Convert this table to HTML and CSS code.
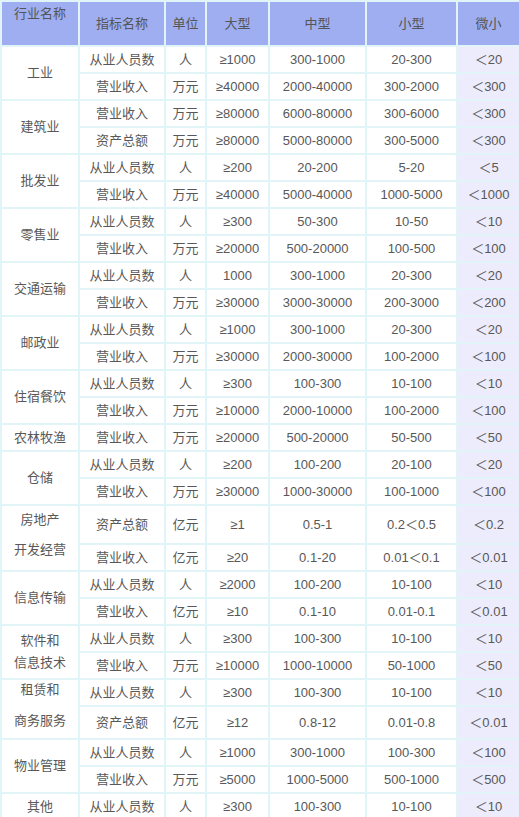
FILE: index.html
```html
<!DOCTYPE html>
<html lang="zh-CN">
<head>
<meta charset="utf-8">
<title>统计上大中小微型企业划分标准</title>
<link rel="stylesheet" href="styles.css">
</head>
<body>
<table class="std">
  <colgroup>
    <col class="c-ind"><col class="c-idx"><col class="c-unit"><col class="c-l"><col class="c-m"><col class="c-s"><col class="c-xs">
  </colgroup>
  <thead>
    <tr class="head">
      <th class="top">行业名称</th><th>指标名称</th><th>单位</th><th>大型</th><th>中型</th><th>小型</th><th class="xs">微小</th>
    </tr>
  </thead>
  <tbody>
    <tr class="r"><td rowspan="2">工业</td><td>从业人员数</td><td>人</td><td>≥1000</td><td>300-1000</td><td>20-300</td><td class="xs">＜20</td></tr>
    <tr class="r"><td>营业收入</td><td>万元</td><td>≥40000</td><td>2000-40000</td><td>300-2000</td><td class="xs">＜300</td></tr>

    <tr class="r"><td rowspan="2">建筑业</td><td>营业收入</td><td>万元</td><td>≥80000</td><td>6000-80000</td><td>300-6000</td><td class="xs">＜300</td></tr>
    <tr class="r"><td>资产总额</td><td>万元</td><td>≥80000</td><td>5000-80000</td><td>300-5000</td><td class="xs">＜300</td></tr>

    <tr class="r"><td rowspan="2">批发业</td><td>从业人员数</td><td>人</td><td>≥200</td><td>20-200</td><td>5-20</td><td class="xs">＜5</td></tr>
    <tr class="r"><td>营业收入</td><td>万元</td><td>≥40000</td><td>5000-40000</td><td>1000-5000</td><td class="xs">＜1000</td></tr>

    <tr class="r"><td rowspan="2">零售业</td><td>从业人员数</td><td>人</td><td>≥300</td><td>50-300</td><td>10-50</td><td class="xs">＜10</td></tr>
    <tr class="r"><td>营业收入</td><td>万元</td><td>≥20000</td><td>500-20000</td><td>100-500</td><td class="xs">＜100</td></tr>

    <tr class="r"><td rowspan="2">交通运输</td><td>从业人员数</td><td>人</td><td>1000</td><td>300-1000</td><td>20-300</td><td class="xs">＜20</td></tr>
    <tr class="r"><td>营业收入</td><td>万元</td><td>≥30000</td><td>3000-30000</td><td>200-3000</td><td class="xs">＜200</td></tr>

    <tr class="r"><td rowspan="2">邮政业</td><td>从业人员数</td><td>人</td><td>≥1000</td><td>300-1000</td><td>20-300</td><td class="xs">＜20</td></tr>
    <tr class="r"><td>营业收入</td><td>万元</td><td>≥30000</td><td>2000-30000</td><td>100-2000</td><td class="xs">＜100</td></tr>

    <tr class="r"><td rowspan="2">住宿餐饮</td><td>从业人员数</td><td>人</td><td>≥300</td><td>100-300</td><td>10-100</td><td class="xs">＜10</td></tr>
    <tr class="r"><td>营业收入</td><td>万元</td><td>≥10000</td><td>2000-10000</td><td>100-2000</td><td class="xs">＜100</td></tr>

    <tr class="r"><td>农林牧渔</td><td>营业收入</td><td>万元</td><td>≥20000</td><td>500-20000</td><td>50-500</td><td class="xs">＜50</td></tr>

    <tr class="r"><td rowspan="2">仓储</td><td>从业人员数</td><td>人</td><td>≥200</td><td>100-200</td><td>20-100</td><td class="xs">＜20</td></tr>
    <tr class="r"><td>营业收入</td><td>万元</td><td>≥30000</td><td>1000-30000</td><td>100-1000</td><td class="xs">＜100</td></tr>

    <tr class="r tall-a"><td rowspan="2" class="stack two-a"><span class="ln">房地产</span><span class="ln">开发经营</span></td><td>资产总额</td><td>亿元</td><td>≥1</td><td>0.5-1</td><td>0.2＜0.5</td><td class="xs">＜0.2</td></tr>
    <tr class="r"><td>营业收入</td><td>亿元</td><td>≥20</td><td>0.1-20</td><td>0.01＜0.1</td><td class="xs">＜0.01</td></tr>

    <tr class="r"><td rowspan="2">信息传输</td><td>从业人员数</td><td>人</td><td>≥2000</td><td>100-200</td><td>10-100</td><td class="xs">＜10</td></tr>
    <tr class="r"><td>营业收入</td><td>亿元</td><td>≥10</td><td>0.1-10</td><td>0.01-0.1</td><td class="xs">＜0.01</td></tr>

    <tr class="r"><td rowspan="2" class="two-b">软件和<br>信息技术</td><td>从业人员数</td><td>人</td><td>≥300</td><td>100-300</td><td>10-100</td><td class="xs">＜10</td></tr>
    <tr class="r"><td>营业收入</td><td>万元</td><td>≥10000</td><td>1000-10000</td><td>50-1000</td><td class="xs">＜50</td></tr>

    <tr class="r"><td rowspan="2" class="stack two-c"><span class="ln">租赁和</span><span class="ln">商务服务</span></td><td>从业人员数</td><td>人</td><td>≥300</td><td>100-300</td><td>10-100</td><td class="xs">＜10</td></tr>
    <tr class="r tall-b"><td>资产总额</td><td>亿元</td><td>≥12</td><td>0.8-12</td><td>0.01-0.8</td><td class="xs">＜0.01</td></tr>

    <tr class="r"><td rowspan="2">物业管理</td><td>从业人员数</td><td>人</td><td>≥1000</td><td>300-1000</td><td>100-300</td><td class="xs">＜100</td></tr>
    <tr class="r"><td>营业收入</td><td>万元</td><td>≥5000</td><td>1000-5000</td><td>500-1000</td><td class="xs">＜500</td></tr>

    <tr class="r"><td>其他</td><td>从业人员数</td><td>人</td><td>≥300</td><td>100-300</td><td>10-100</td><td class="xs">＜10</td></tr>
  </tbody>
</table>
</body>
</html>
```

FILE: styles.css
```css
html, body {
  margin: 0;
  padding: 0;
  background: #ffffff;
}

.std {
  width: 519px;
  border-collapse: collapse;
  table-layout: fixed;
  border: 2px solid #e1f5f8;
  font-family: "Liberation Sans", "Noto Sans CJK SC", sans-serif;
  font-size: 13px;
  color: #585858;
}

.c-ind { width: 78px; }
.c-idx { width: 86px; }
.c-unit { width: 41px; }
.c-l { width: 63px; }
.c-m { width: 97px; }
.c-s { width: 91px; }
.c-xs { width: 63px; }

.std th,
.std td {
  border: 2px solid #e1f5f8;
  padding: 0;
  text-align: center;
  vertical-align: middle;
  font-weight: normal;
  line-height: 18px;
  white-space: nowrap;
}

.head th {
  background: #9eaef0;
  height: 40px;
  color: #555555;
}

.std .head th.top {
  vertical-align: top;
  padding-top: 3px;
}

.std td.xs {
  background: #ececfc;
}

.r {
  height: 27px;
}

.tall-a {
  height: 39px;
}

.tall-b {
  height: 33px;
}

.std td.stack {
  vertical-align: top;
}

.stack .ln {
  display: block;
  line-height: 18px;
}

.std td.two-a {
  padding-top: 5px;
}

.two-a .ln + .ln {
  margin-top: 12px;
}

.std td.two-b {
  line-height: 22px;
}

.std td.two-c {
  padding-top: 1px;
}

.two-c .ln + .ln {
  margin-top: 13px;
}
```
